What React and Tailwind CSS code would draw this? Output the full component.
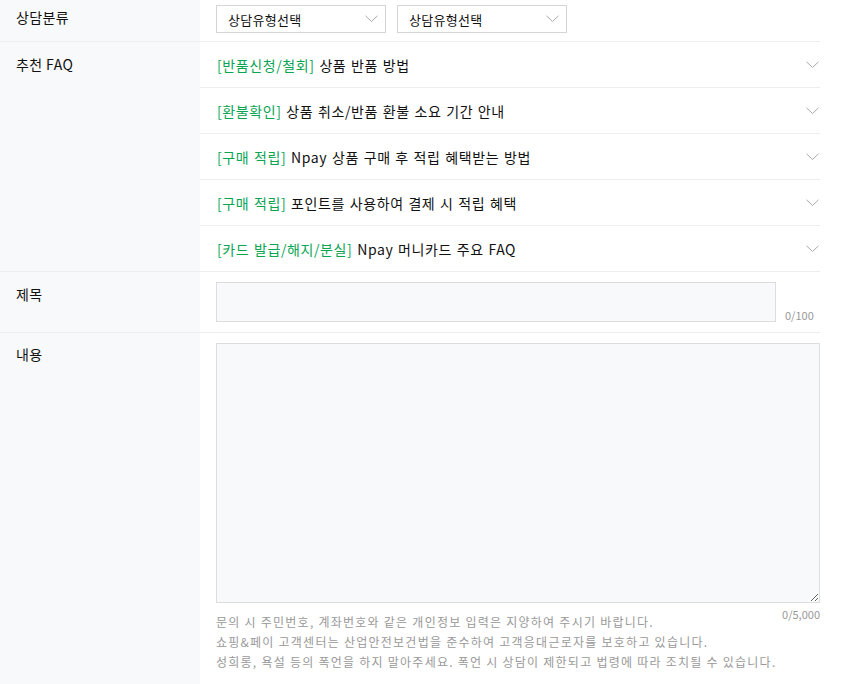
import React from "react";

const font = { fontFamily: '"Noto Sans CJK KR", "Noto Sans", sans-serif' };

function Chevron({ className = "" }) {
  return (
    <svg width="13" height="8" viewBox="0 0 13 8" className={className}>
      <polyline points="0.5,0.8 6.5,6.5 12.5,0.8" fill="none" stroke="#a8a8a8" strokeWidth="1" />
    </svg>
  );
}

function Select() {
  return (
    <div className="flex h-[28px] w-[170px] items-center justify-between border border-[#d5d5d5] bg-white pl-[11px] pr-[7px] text-[13px] tracking-[0.3px] text-[#111]">
      <span className="leading-none">상담유형선택</span>
      <Chevron />
    </div>
  );
}

const faqs = [
  ["[반품신청/철회]", "상품 반품 방법"],
  ["[환불확인]", "상품 취소/반품 환불 소요 기간 안내"],
  ["[구매 적립]", "Npay 상품 구매 후 적립 혜택받는 방법"],
  ["[구매 적립]", "포인트를 사용하여 결제 시 적립 혜택"],
  ["[카드 발급/해지/분실]", "Npay 머니카드 주요 FAQ"],
];

function Label({ children, className = "" }) {
  return (
    <div className={"w-[200px] shrink-0 bg-[#f8f9fb] pl-4 text-[14px] leading-[20px] tracking-[0.4px] text-[#111] " + className}>
      {children}
    </div>
  );
}

export default function App() {
  return (
    <div className="min-h-[684px] w-[854px] bg-white" style={font}>
      <div className="flex min-h-[684px] w-[820px] flex-col">
        {/* 상담분류 */}
        <div className="flex h-[42px] border-b border-[#eeeeee]">
          <Label className="pt-[7px]">상담분류</Label>
          <div className="flex flex-1 gap-[11px] pl-4 pt-[5px]">
            <Select />
            <Select />
          </div>
        </div>

        {/* 추천 FAQ */}
        <div className="flex border-b border-[#eeeeee]">
          <Label className="pt-[12px]">추천 FAQ</Label>
          <div className="flex flex-1 flex-col">
            {faqs.map(([tag, title], i) => (
              <div
                key={i}
                className={
                  "flex items-center justify-between pl-[17px] pr-[1px] text-[14px] tracking-[0.6px] [word-spacing:1px] " +
                  (i < faqs.length - 1 ? "h-[46px] border-b border-[#eeeeee]" : "h-[45px]")
                }
              >
                <span className="leading-[20px]">
                  <span className="text-[#09a553]">{tag}</span>{" "}
                  <span className="text-[#111]">{title}</span>
                </span>
                <Chevron />
              </div>
            ))}
          </div>
        </div>

        {/* 제목 */}
        <div className="flex h-[61px] border-b border-[#eeeeee]">
          <Label className="pt-[12px]">제목</Label>
          <div className="flex flex-1 items-start pl-4 pt-[10px]">
            <div className="h-[40px] w-[560px] shrink-0 border border-[#dddddd] bg-[#f8f9fa]" />
            <div className="ml-[9px] mt-[26px] text-[11px] leading-[14px] text-[#999]">0/100</div>
          </div>
        </div>

        {/* 내용 */}
        <div className="flex flex-1">
          <Label className="pt-[11px]">내용</Label>
          <div className="flex flex-1 flex-col pl-4 pt-[10px]">
            <textarea
              className="block h-[260px] w-[604px] resize-y border border-[#dddddd] bg-[#f8f9fa] outline-none"
              style={font}
            />
            <div className="flex justify-between">
              <div className="mt-[9px] text-[12px] leading-[20px] tracking-[1.25px] text-[#999]">
                <p>문의 시 주민번호, 계좌번호와 같은 개인정보 입력은 지양하여 주시기 바랍니다.</p>
                <p>쇼핑&amp;페이 고객센터는 산업안전보건법을 준수하여 고객응대근로자를 보호하고 있습니다.</p>
                <p>성희롱, 욕설 등의 폭언을 하지 말아주세요. 폭언 시 상담이 제한되고 법령에 따라 조치될 수 있습니다.</p>
              </div>
              <div className="mt-[4px] text-[11px] leading-[14px] text-[#999]">0/5,000</div>
            </div>
          </div>
        </div>
      </div>
    </div>
  );
}
